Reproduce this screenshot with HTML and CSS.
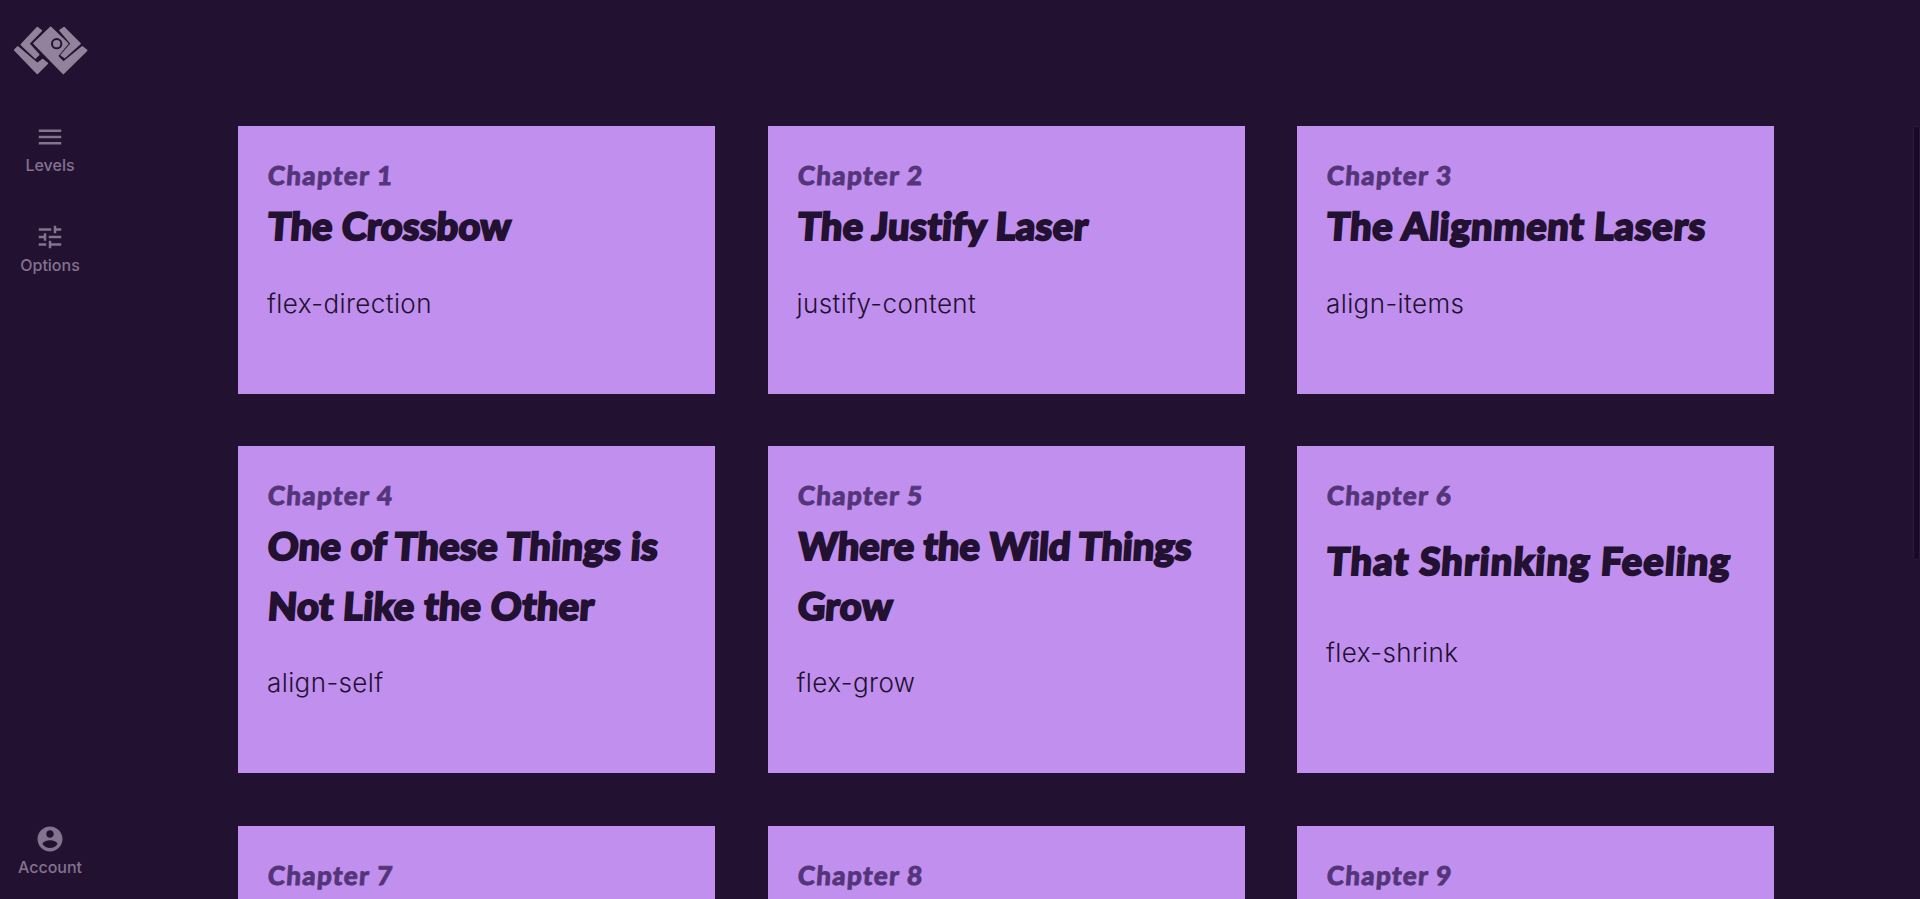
FILE: index.html
```html
<!DOCTYPE html>
<html lang="en">
<head>
<meta charset="utf-8">
<title>Chapters</title>
<link rel="stylesheet" href="styles.css">
</head>
<body>
<div class="app">
  <nav class="sidebar">
    <svg class="logo" viewBox="0 0 330 240" aria-label="Home">
      <g class="logo-shape">
        <path d="M44 120 53 111 112 161 128 149 142 160 112 190Z"/>
        <path d="M64 104 112 53 124 62 86 101 116 134 106 144Z"/>
        <path d="M102 100 152 52 203 101 172 138 190 157 247 111 260 121 190 190Z"/>
        <path d="M180 61 192 53 240 101 194 142 184 135 214 101Z"/>
      </g>
      <circle class="logo-ring" cx="170" cy="101" r="14"/>
    </svg>
    <a class="nav-item"><svg class="icon" viewBox="0 0 24 24"><path d="M3 18h18v-2H3v2zm0-5h18v-2H3v2zm0-7v2h18V6H3z"/></svg><span>Levels</span></a>
    <a class="nav-item"><svg class="icon" viewBox="0 0 24 24"><path d="M3 17v2h6v-2H3zM3 5v2h10V5H3zm10 16v-2h8v-2h-8v-2h-2v6h2zM7 9v2H3v2h4v2h2V9H7zm14 4v-2H11v2h10zm-6-4h2V7h4V5h-4V3h-2v6z"/></svg><span>Options</span></a>
    <a class="nav-item nav-account"><svg class="icon" viewBox="0 0 24 24"><path d="M12 2C6.480 2 2 6.480 2 12s4.480 10 10 10 10-4.480 10-10S17.520 2 12 2zm0 3c1.660 0 3 1.340 3 3s-1.340 3-3 3-3-1.340-3-3 1.340-3 3-3zm0 14.200c-2.500 0-4.710-1.280-6-3.220.03-1.990 4-3.080 6-3.080 1.990 0 5.970 1.090 6 3.080-1.290 1.940-3.500 3.220-6 3.220z"/></svg><span>Account</span></a>
  </nav>
  <main class="chapters">
    <article class="card"><h3 class="chapter"><span>Chapter 1</span></h3><h2 class="title"><span class="fit-a">The Crossbow</span></h2><p class="topic">flex-direction</p></article>
    <article class="card"><h3 class="chapter"><span>Chapter 2</span></h3><h2 class="title"><span class="fit-b">The Justify Laser</span></h2><p class="topic">justify-content</p></article>
    <article class="card"><h3 class="chapter"><span>Chapter 3</span></h3><h2 class="title"><span class="fit-c">The Alignment Lasers</span></h2><p class="topic">align-items</p></article>
    <article class="card"><h3 class="chapter"><span>Chapter 4</span></h3><h2 class="title"><span class="fit-b">One of These Things is</span><span class="fit-b">Not Like the Other</span></h2><p class="topic">align-self</p></article>
    <article class="card"><h3 class="chapter"><span>Chapter 5</span></h3><h2 class="title"><span class="fit-a">Where the Wild Things</span><span class="fit-b">Grow</span></h2><p class="topic">flex-grow</p></article>
    <article class="card"><h3 class="chapter"><span>Chapter 6</span></h3><h2 class="title"><span class="fit-d">That Shrinking Feeling</span></h2><p class="topic">flex-shrink</p></article>
    <article class="card"><h3 class="chapter"><span>Chapter 7</span></h3></article>
    <article class="card"><h3 class="chapter"><span>Chapter 8</span></h3></article>
    <article class="card"><h3 class="chapter"><span>Chapter 9</span></h3></article>
  </main>
  <div class="scroll-track"><div class="scroll-thumb"></div></div>
</div>
</body>
</html>
```
FILE: styles.css
```css
* { box-sizing: border-box; }
body { margin: 0; background: #221131; font-family: Inter, sans-serif; overflow: hidden; }
.app { display: grid; grid-template-columns: 100px 1fr 8px; height: 899px; overflow: hidden; }
.sidebar { display: flex; flex-direction: column; color: #84728f; height: 899px; }
.logo { width: 110px; height: 80px; margin-top: 10px; flex: none; }
.logo-shape { fill: #93829b; stroke: #93829b; stroke-width: 5; stroke-linejoin: round; }
.logo-ring { fill: none; stroke: #221131; stroke-width: 6; }
.nav-item { display: flex; flex-direction: column; align-items: center; height: 100px; padding-top: 32px; font-size: 16px; font-weight: 500; line-height: 20px; }
.icon { width: 30px; height: 30px; fill: currentColor; margin-bottom: 3px; }
.nav-account { margin-top: auto; height: 92px; padding-top: 17px; }
.chapters { display: grid; grid-template-columns: repeat(3, 477px); grid-template-rows: 268px 327px 327px; gap: 52.400px 52.500px; padding: 126px 0 0 138px; }
.card { display: flex; flex-direction: column; background: #c18fee; color: #221131; padding: 29px 20px 69px 29px; }
.chapter, .title, .topic { margin: 0; }
.chapter { padding-left: 1px; font: 900 26px/40px Lato, sans-serif; letter-spacing: 1.300px; color: #55357a; -webkit-text-stroke: 0.800px #55357a; }
.chapter span, .title span { display: inline-block; width: max-content; white-space: nowrap; transform: skewX(-4deg); }
.title { display: flex; flex: 1 0 auto; flex-direction: column; justify-content: center; padding-left: 1px; font: 900 38px/60px Lato, sans-serif; -webkit-text-stroke: 2px #221131; }
.fit-a { letter-spacing: 0.100px; }
.fit-b { letter-spacing: 0.400px; }
.fit-c { letter-spacing: 0.720px; }
.fit-d { letter-spacing: 1.200px; }
.topic { flex: 1 0 auto; padding-top: 27px; font-size: 26px; font-weight: 320; line-height: 42px; letter-spacing: 0.400px; }
.scroll-track { padding-top: 126px; }
.scroll-thumb { height: 434px; width: 7px; margin-left: 1px; border-radius: 3px; background: #1b0829; border: 1px solid #2c1a3b; }
```
